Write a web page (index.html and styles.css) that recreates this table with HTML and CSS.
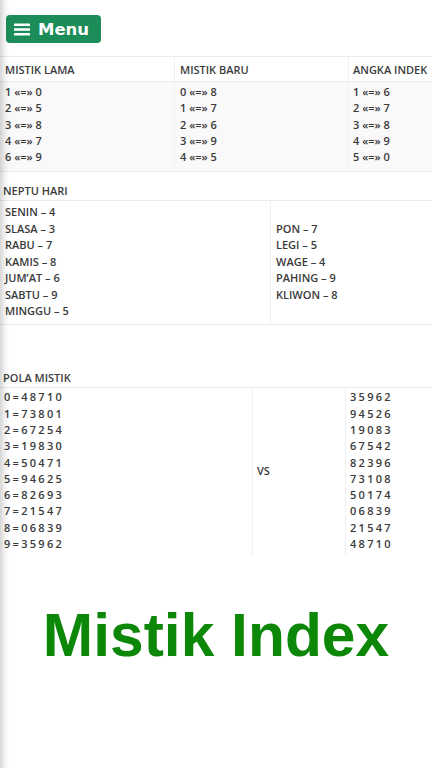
FILE: index.html
```html
<!DOCTYPE html>
<html lang="id">
<head>
<meta charset="utf-8">
<title>Mistik Index</title>
<link rel="stylesheet" href="styles.css">
</head>
<body>
<div class="page">
  <div class="topbar">
    <button class="menu-btn">
      <svg class="burger" width="16" height="13" viewBox="0 0 16 13"><rect x="0" y="0.5" width="16" height="2.6" rx="0.6" fill="#fff"/><rect x="0" y="5.2" width="16" height="2.6" rx="0.6" fill="#fff"/><rect x="0" y="9.9" width="16" height="2.6" rx="0.6" fill="#fff"/></svg>
      <span>Menu</span>
    </button>
  </div>

  <table class="tbl t1">
    <thead>
      <tr><th class="c1">MISTIK LAMA</th><th class="c2">MISTIK BARU</th><th class="c3">ANGKA INDEK</th></tr>
    </thead>
    <tbody>
      <tr>
        <td>1 «=» 0<br>2 «=» 5<br>3 «=» 8<br>4 «=» 7<br>6 «=» 9</td>
        <td>0 «=» 8<br>1 «=» 7<br>2 «=» 6<br>3 «=» 9<br>4 «=» 5</td>
        <td>1 «=» 6<br>2 «=» 7<br>3 «=» 8<br>4 «=» 9<br>5 «=» 0</td>
      </tr>
    </tbody>
  </table>

  <table class="tbl t2">
    <thead>
      <tr><th colspan="2">NEPTU HARI</th></tr>
    </thead>
    <tbody>
      <tr>
        <td class="n1">SENIN – 4<br>SLASA – 3<br>RABU – 7<br>KAMIS – 8<br>JUM’AT – 6<br>SABTU – 9<br>MINGGU – 5</td>
        <td class="n2">PON – 7<br>LEGI – 5<br>WAGE – 4<br>PAHING – 9<br>KLIWON – 8</td>
      </tr>
    </tbody>
  </table>

  <table class="tbl t3">
    <thead>
      <tr><th colspan="3">POLA MISTIK</th></tr>
    </thead>
    <tbody>
      <tr>
        <td class="p1 sp">0=48710<br>1=73801<br>2=67254<br>3=19830<br>4=50471<br>5=94625<br>6=82693<br>7=21547<br>8=06839<br>9=35962</td>
        <td class="p2">VS</td>
        <td class="p3 sp">35962<br>94526<br>19083<br>67542<br>82396<br>73108<br>50174<br>06839<br>21547<br>48710</td>
      </tr>
    </tbody>
  </table>

  <h1 class="title">Mistik Index</h1>
</div>
</body>
</html>
```

FILE: styles.css
```css
html, body {
  margin: 0;
  padding: 0;
  background: #fff;
}
body {
  font-family: "Open Sans", "DejaVu Sans", sans-serif;
  color: #333;
  width: 432px;
  height: 768px;
  overflow: hidden;
  position: relative;
}
body::before {
  content: "";
  position: fixed;
  left: 0;
  top: 0;
  bottom: 0;
  width: 9px;
  background: linear-gradient(to right, rgba(0,0,0,0.16), rgba(0,0,0,0.06) 50%, rgba(0,0,0,0));
  pointer-events: none;
  z-index: 5;
}
.topbar {
  padding: 15px 0 0 6px;
  height: 56px;
  box-sizing: border-box;
}
.menu-btn {
  display: flex;
  align-items: center;
  gap: 8px;
  width: 95px;
  height: 28px;
  padding: 0 0 0 8px;
  border: 0;
  border-radius: 4px;
  background: #1c8c58;
  color: #fff;
  font-family: "DejaVu Sans", sans-serif;
  font-weight: bold;
  font-size: 16.5px;
  box-sizing: border-box;
}
.burger { display: block; }
.tbl {
  width: 432px;
  border-collapse: collapse;
  font-size: 11px;
  font-weight: 600;
  color: #3a3a3a;
}
.tbl th {
  text-align: left;
  font-weight: 600;
  color: #3c3c3c;
  padding: 0 4px;
  height: 24px;
  border-bottom: 1px solid #ececec;
}
.tbl td {
  vertical-align: top;
  line-height: 16.4px;
}
.t1 {
  border-top: 1px solid #ececec;
}
.t1 th {
  height: 24px;
}
.t1 .c1 { width: 165px; padding-left: 5px; }
.t1 .c2 { width: 164px; padding-left: 5px; border-left: 1px solid #f0f0f0; }
.t1 .c3 { padding-left: 4px; border-left: 1px solid #f0f0f0; }
.t1 td {
  background: #f9f9f9;
  padding: 2px 4px 6px 5px;
  line-height: 16.3px;
  border-bottom: 1px solid #ececec;
}
.t1 td + td { border-left: 1px solid #f0f0f0; }
.t1 td:last-child { padding-left: 4px; }

.t2 {
  margin-top: 8px;
}
.t2 th {
  height: 20px;
  padding-left: 3px;
}
.t2 td {
  padding: 3px 4px 5px 5px;
  border-bottom: 1px solid #ececec;
}
.t2 .n1 { width: 261px; }
.t2 .n2 {
  vertical-align: middle;
  border-left: 1px solid #f0f0f0;
  padding-left: 5px;
}

.t3 {
  margin-top: 43px;
}
.t3 th {
  height: 19px;
  padding-left: 3px;
}
.t3 td {
  padding: 1px 4px 3px 4px;
  line-height: 16.3px;
}
.t3 .p1 { width: 244px; }
.t3 .p2 {
  width: 84px;
  vertical-align: middle;
  border-left: 1px solid #f0f0f0;
  border-right: 1px solid #f0f0f0;
}
.t3 .sp {
  letter-spacing: 2.3px;
}
.title {
  margin: 50px 0 0 0;
  text-align: center;
  font-family: "Liberation Sans", Arial, sans-serif;
  font-weight: bold;
  font-size: 60.5px;
  line-height: 61px;
  color: #0c8707;
}
```
